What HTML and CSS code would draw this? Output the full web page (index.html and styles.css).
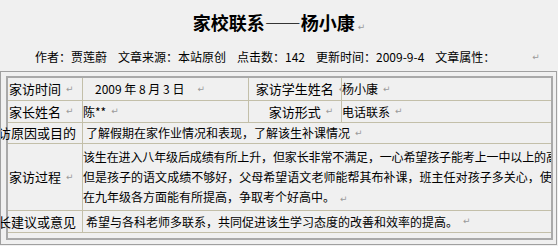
FILE: index.html
```html
<!DOCTYPE html>
<html lang="zh-CN">
<head>
<meta charset="utf-8">
<title>家校联系——杨小康</title>
<link rel="stylesheet" href="styles.css">
</head>
<body>
<h1 class="title">家校联系——杨小康<span class="pm">↵</span></h1>
<p class="meta"><span>作者：贾莲蔚</span><span>文章来源：本站原创</span><span>点击数：142</span><span>更新时间：2009-9-4</span><span>文章属性：</span><span class="pm pm-meta">↵</span></p>
<div class="frame">
  <div class="sheet">
    <div class="c c1 lbl">家访时间<span class="pm">↵</span></div>
    <div class="c c2 date">2009 年 8 月 3 日<span class="pm pm-wide">↵</span></div>
    <div class="c c3 lbl">家访学生姓名<span class="pm">↵</span></div>
    <div class="c c4">杨小康<span class="pm">↵</span></div>

    <div class="c c1 lbl">家长姓名<span class="pm">↵</span></div>
    <div class="c c2">陈**<span class="pm">↵</span></div>
    <div class="c c3 lbl">家访形式<span class="pm">↵</span></div>
    <div class="c c4">电话联系<span class="pm">↵</span></div>

    <div class="c c1 lbl over">家访原因或目的</div>
    <div class="c span ind">了解假期在家作业情况和表现，了解该生补课情况<span class="pm">↵</span></div>

    <div class="c c1 lbl">家访过程<span class="pm">↵</span></div>
    <div class="c span multi">
      <div class="ln ln1">该生在进入八年级后成绩有所上升，但家长非常不满足，一心希望孩子能考上一中以上的高中，</div>
      <div class="ln ln2">但是孩子的语文成绩不够好，父母希望语文老师能帮其布补课，班主任对孩子多关心，使孩子</div>
      <div class="ln">在九年级各方面能有所提高，争取考个好高中。<span class="pm">↵</span></div>
    </div>

    <div class="c c1 lbl over">家长建议或意见</div>
    <div class="c span ind">希望与各科老师多联系，共同促进该生学习态度的改善和效率的提高。<span class="pm">↵</span></div>

    <div class="c last"></div>
  </div>
</div>
</body>
</html>
```

FILE: styles.css
```css
* { box-sizing: border-box; }
html, body { margin: 0; padding: 0; }
body {
  width: 558px;
  height: 246px;
  overflow: hidden;
  background: #f0f0f0;
  color: #000;
  font-family: "Noto Sans CJK SC", "Noto Sans", sans-serif;
}
.pm {
  color: #9a9a9a;
  font-size: 9px;
  line-height: 1;
  font-weight: normal;
  margin-left: 5px;
  font-family: "DejaVu Sans", sans-serif;
}
.title {
  margin: 0;
  padding-top: 10px;
  height: 34px;
  line-height: 24px;
  font-size: 18px;
  font-weight: bold;
  text-align: center;
}
.title .pm { margin-left: 3px; }
.meta {
  margin: 14px 0 0;
  padding-left: 35px;
  height: 18px;
  display: flex;
  align-items: center;
  gap: 11px;
  font-size: 12px;
  line-height: 18px;
  white-space: nowrap;
}
.meta .pm-meta { margin-left: 26px; }
.frame {
  margin-top: 5px;
  width: 557px;
  height: 174px;
  border: 1px solid #a0a0a0;
  padding: 4px 3px 4px 5px;
  overflow: hidden;
}
.sheet {
  width: 547px;
  height: 164px;
  border: 2px solid #a9a9a9;
  display: grid;
  grid-template-columns: 75px 166px 93px 209px;
  grid-template-rows: 23px 22px 21px 67px 22px 5px;
}
.c {
  display: flex;
  align-items: center;
  white-space: nowrap;
  overflow: hidden;
  font-size: 12px;
  line-height: 20px;
  border-right: 1px solid #c3bfa9;
  border-bottom: 1px solid #c3bfa9;
}
.c4, .span { border-right: none; }
.lbl { font-size: 13px; }
.c1 { padding-left: 1px; }
.c3 { justify-content: center; padding-left: 12px; }
.date { padding-left: 12px; }
.pm-wide { margin-left: 13px; }
.over {
  overflow: visible;
  justify-content: flex-end;
  padding-left: 0;
  padding-right: 6px;
}
.span { grid-column: 2 / -1; }
.ind { padding-left: 3px; }
.multi {
  flex-direction: column;
  align-items: flex-start;
  justify-content: center;
}
.ln { white-space: nowrap; }
.ln1 { letter-spacing: -0.13px; }
.ln2 { letter-spacing: 0.02px; }
.last {
  grid-column: 1 / -1;
  border: none;
}
```
